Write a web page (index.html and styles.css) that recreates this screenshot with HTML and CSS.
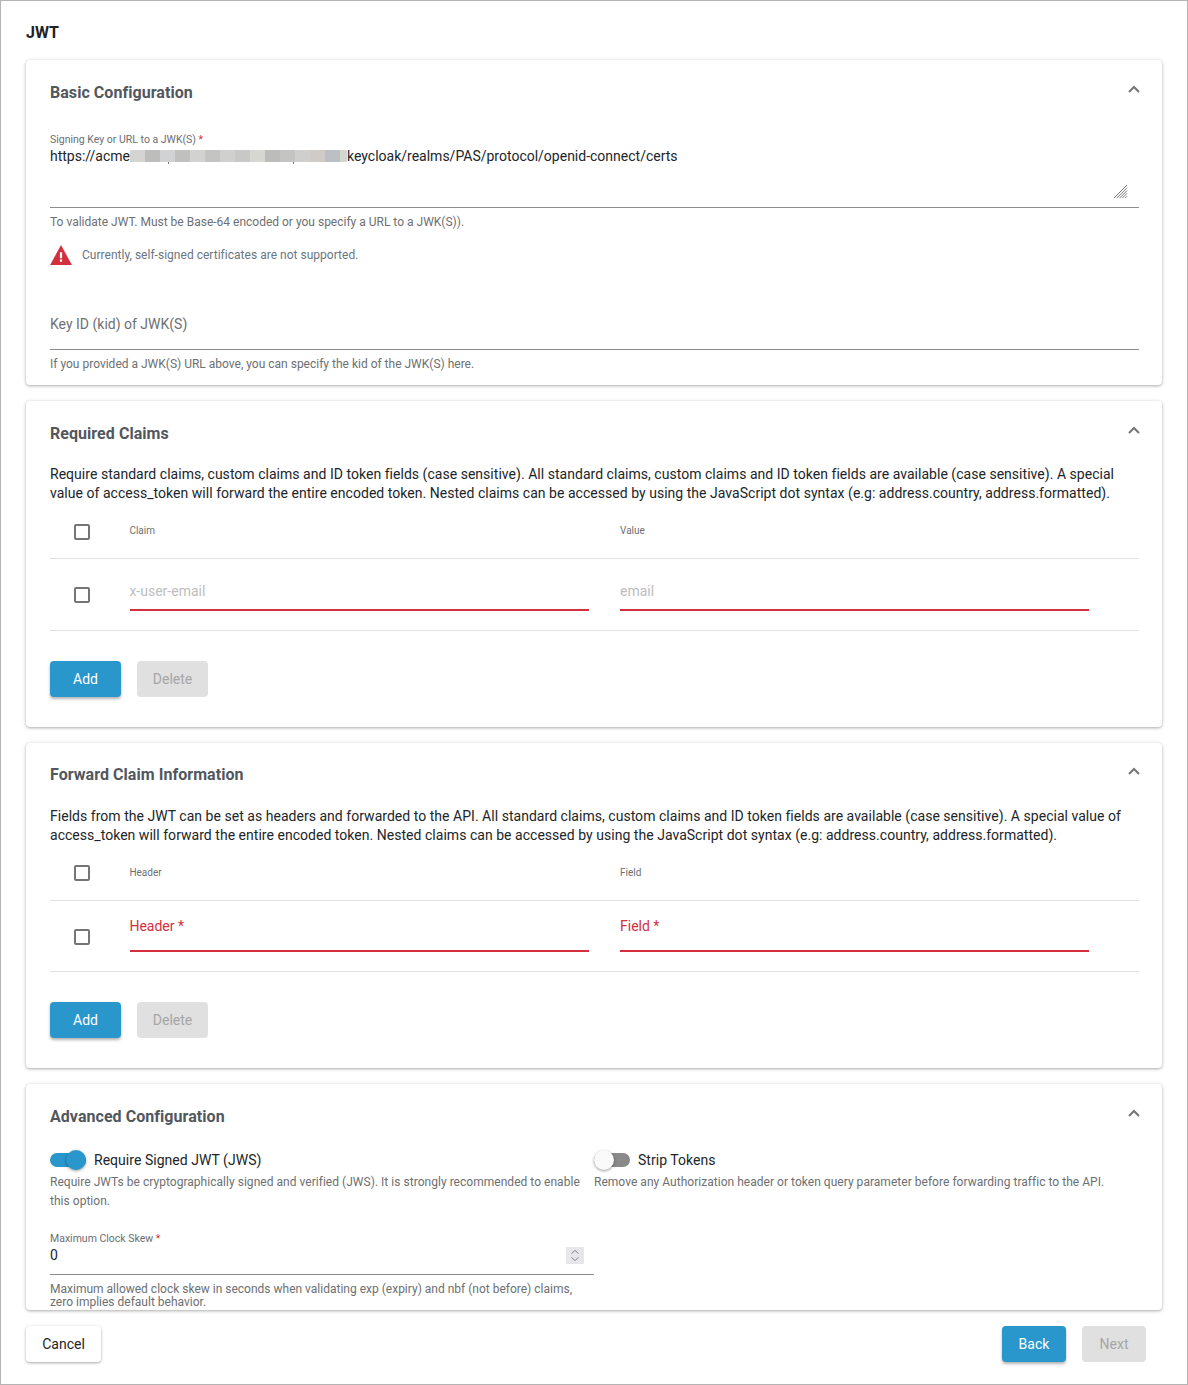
FILE: index.html
```html
<!DOCTYPE html>
<html lang="en">
<head>
  <meta charset="UTF-8">
  <meta name="viewport" content="width=device-width, initial-scale=1.0">
  <title>JWT</title>
  <link rel="stylesheet" href="styles.css">
</head>
<body>
  <div class="page">
    <div class="page-title">JWT</div>

    <!-- Basic Configuration -->
    <section class="card card-basic">
      <div class="card-header">
        <h2 class="card-title">Basic Configuration</h2>
        <svg class="chevron" viewBox="0 0 12 8"><path d="M1 7l5-5 5 5" /></svg>
      </div>

      <div class="field-label">Signing Key or URL to a JWK(S) <span class="req">*</span></div>
      <div class="textarea">
        <div class="url">https://acme<span class="redacted"></span>keycloak/realms/PAS/protocol/openid-connect/certs</div>
        <svg class="grip" viewBox="0 0 16 16"><path d="M15 1L1 15M15 4L4 15M15 7L7 15M15 10L10 15M15 13L13 15" /></svg>
      </div>
      <div class="help help-first">To validate JWT. Must be Base-64 encoded or you specify a URL to a JWK(S)).</div>

      <div class="warning">
        <svg class="warning-icon" viewBox="0 0 24 22"><path class="warning-tri" d="M12 0L24 22H0z" /><path class="warning-mark" d="M10.8 8h2.4v6.5h-2.4zM10.8 16h2.4v2.4h-2.4z" /></svg>
        <span>Currently, self-signed certificates are not supported.</span>
      </div>

      <div class="input-line key-id">Key ID (kid) of JWK(S)</div>
      <div class="help help-first">If you provided a JWK(S) URL above, you can specify the kid of the JWK(S) here.</div>
    </section>

    <!-- Required Claims -->
    <section class="card card-table">
      <div class="card-header">
        <h2 class="card-title">Required Claims</h2>
        <svg class="chevron" viewBox="0 0 12 8"><path d="M1 7l5-5 5 5" /></svg>
      </div>
      <p class="intro">Require standard claims, custom claims and ID token fields (case sensitive). All standard claims, custom claims and ID token fields are available (case sensitive). A special value of access_token will forward the entire encoded token. Nested claims can be accessed by using the JavaScript dot syntax (e.g: address.country, address.formatted).</p>

      <div class="table-head">
        <div class="col-check"><span class="checkbox"></span></div>
        <div class="col-a"><span class="col-text">Claim</span></div>
        <div class="col-b">Value</div>
      </div>
      <div class="table-row">
        <div class="col-check"><span class="checkbox"></span></div>
        <div class="col-a red-field"><span class="placeholder col-text">x-user-email</span></div>
        <div class="col-b red-field"><span class="placeholder">email</span></div>
      </div>

      <div class="actions">
        <button class="btn btn-primary">Add</button>
        <button class="btn btn-disabled">Delete</button>
      </div>
    </section>

    <!-- Forward Claim Information -->
    <section class="card card-table card-forward">
      <div class="card-header">
        <h2 class="card-title">Forward Claim Information</h2>
        <svg class="chevron" viewBox="0 0 12 8"><path d="M1 7l5-5 5 5" /></svg>
      </div>
      <p class="intro">Fields from the JWT can be set as headers and forwarded to the API. All standard claims, custom claims and ID token fields are available (case sensitive). A special value of access_token will forward the entire encoded token. Nested claims can be accessed by using the JavaScript dot syntax (e.g: address.country, address.formatted).</p>

      <div class="table-head">
        <div class="col-check"><span class="checkbox"></span></div>
        <div class="col-a"><span class="col-text">Header</span></div>
        <div class="col-b">Field</div>
      </div>
      <div class="table-row">
        <div class="col-check"><span class="checkbox"></span></div>
        <div class="col-a red-field"><span class="error-label col-text">Header *</span></div>
        <div class="col-b red-field"><span class="error-label">Field *</span></div>
      </div>

      <div class="actions">
        <button class="btn btn-primary">Add</button>
        <button class="btn btn-disabled">Delete</button>
      </div>
    </section>

    <!-- Advanced Configuration -->
    <section class="card card-advanced">
      <div class="card-header">
        <h2 class="card-title">Advanced Configuration</h2>
        <svg class="chevron" viewBox="0 0 12 8"><path d="M1 7l5-5 5 5" /></svg>
      </div>

      <div class="switch-columns">
        <div class="switch-col">
          <div class="switch-line">
            <span class="switch switch-on"><span class="thumb"></span></span>
            <span class="switch-text">Require Signed JWT (JWS)</span>
          </div>
          <div class="switch-help">Require JWTs be cryptographically signed and verified (JWS). It is strongly recommended to enable this option.</div>
        </div>
        <div class="switch-col">
          <div class="switch-line">
            <span class="switch"><span class="thumb"></span></span>
            <span class="switch-text">Strip Tokens</span>
          </div>
          <div class="switch-help">Remove any Authorization header or token query parameter before forwarding traffic to the API.</div>
        </div>
      </div>

      <div class="skew">
        <div class="field-label">Maximum Clock Skew <span class="req">*</span></div>
        <div class="number-input">
          <span>0</span>
          <span class="spinner">
            <svg viewBox="0 0 18 18"><path d="M5.5 7L9 3.5 12.500 7M5.500 11L9 14.500 12.500 11" /></svg>
          </span>
        </div>
        <div class="help skew-help">Maximum allowed clock skew in seconds when validating exp (expiry) and nbf (not before) claims, zero implies default behavior.</div>
      </div>
    </section>

    <div class="footer">
      <button class="btn btn-white">Cancel</button>
      <div class="footer-right">
        <button class="btn btn-primary btn-nav">Back</button>
        <button class="btn btn-disabled btn-nav">Next</button>
      </div>
    </div>
  </div>
</body>
</html>
```

FILE: styles.css
```css
/* Basic Reset */
* {
  margin: 0;
  padding: 0;
  box-sizing: border-box;
}

html, body {
  height: 100%;
}

body {
  font-family: Roboto, "Liberation Sans", Arial, sans-serif;
  background-color: #fff;
  color: #212529;
  overflow: hidden;
}

.page {
  height: 1385px;
  border: 1px solid #b4b4b4;
  padding: 0 25px;
  overflow: hidden;
}

.page-title {
  font-size: 16px;
  font-weight: 700;
  line-height: 20px;
  color: #1f2226;
  padding-top: 1px;
  margin-top: 21px;
  margin-bottom: 17px;
}

/* Cards */
.card {
  width: 1136px;
  background-color: #fff;
  border-radius: 4px;
  padding: 0 24px;
  margin-bottom: 16px;
  overflow: hidden;
  box-shadow: 0 1px 3px rgba(0, 0, 0, 0.3), 0 0 6px rgba(0, 0, 0, 0.06);
}

.card-basic { height: 325px; }
.card-table { height: 326px; }
.card-forward { height: 325px; }
.card-advanced { height: 226px; }

.card-header {
  display: flex;
  justify-content: space-between;
  height: 66px;
  padding-top: 23px;
}

.card-forward .card-header {
  padding-top: 22px;
}

.card-title {
  font-size: 16px;
  font-weight: 700;
  line-height: 20px;
  letter-spacing: 0.05px;
  color: #52575d;
}

.chevron {
  width: 12px;
  height: 8px;
  margin-top: 2px;
  margin-right: -2px;
  fill: none;
  stroke: #757575;
  stroke-width: 2;
}

/* Inputs */
.field-label {
  font-size: 10.5px;
  line-height: 13px;
  color: #6b6e72;
  margin-top: 7px;
}

.req {
  color: #d32f3c;
}

.textarea {
  position: relative;
  width: 1089px;
  height: 62px;
  border-bottom: 1px solid #8c8c8c;
}

.url {
  display: flex;
  align-items: center;
  font-size: 14px;
  line-height: 20px;
  color: #212529;
}

.redacted {
  position: relative;
  display: block;
  width: 217px;
  height: 12px;
  background: linear-gradient(to right,
    #d4d4d2 0 15px, #bdbdbb 15px 30px, #d0d2d4 30px 45px, #c0c0be 45px 60px,
    #d2d2d0 60px 75px, #c4c4c2 75px 90px, #d0d0ce 90px 105px, #c8c8c6 105px 120px,
    #d6d6d2 120px 135px, #bcbcba 135px 150px, #c4c4c2 150px 165px, #cfcfcd 165px 180px,
    #cfcbc7 180px 195px, #bcc0c4 195px 210px, #d4d6d0 210px 217px);
}

/* the bits of descender that stick out under the blur */
.redacted::before, .redacted::after {
  content: "";
  position: absolute;
  top: 12px;
  width: 1px;
  height: 2px;
  background-color: #777;
}

.redacted::before { left: 38px; }
.redacted::after { left: 163px; }

.grip {
  position: absolute;
  right: 11px;
  bottom: 8px;
  width: 15px;
  height: 15px;
  fill: none;
  stroke: #6e6e6e;
  stroke-width: 1;
}

.help {
  font-size: 12px;
  line-height: 14px;
  color: #6d7072;
}

.help-first {
  margin-top: 7px;
}

.warning {
  display: flex;
  align-items: center;
  gap: 10px;
  height: 20px;
  margin-top: 16px;
  font-size: 12px;
  letter-spacing: 0.02px;
  color: #6b7680;
}

.warning-icon {
  width: 22px;
  height: 20px;
}

.warning-tri {
  fill: #d32f3c;
}

.warning-mark {
  fill: #fff;
}

.input-line {
  width: 1089px;
  border-bottom: 1px solid #8c8c8c;
  font-size: 14px;
  color: #6d7072;
}

.key-id {
  height: 41px;
  margin-top: 44px;
  padding-top: 5px;
  line-height: 20px;
}

/* Claim tables */
.intro {
  font-size: 14px;
  line-height: 19px;
  letter-spacing: 0.03px;
  color: #212529;
  margin-top: -2px;
}

.table-head, .table-row {
  display: flex;
  width: 1089px;
  border-bottom: 1px solid #e0e0e0;
}

.table-head {
  height: 56px;
  font-size: 10px;
  color: #6d7072;
  padding-top: 21px;
  line-height: 14px;
}

.table-row {
  height: 72px;
}

.card-forward .table-row {
  height: 71px;
}

.col-check {
  width: 80px;
  padding-left: 24px;
  flex-shrink: 0;
}

.col-a {
  width: 459px;
  margin-right: 31px;
}

.col-b {
  width: 469px;
}

.col-text {
  display: block;
  margin-left: -0.6px;
}

.checkbox {
  display: block;
  width: 16px;
  height: 16px;
  border: 2px solid #757575;
  border-radius: 2px;
}

.card-forward .table-head .checkbox {
  margin-top: -1px;
}

.table-row .checkbox {
  margin-top: 28px;
}

.red-field {
  height: 52px;
  border-bottom: 2px solid #d32f3c;
  font-size: 14px;
  line-height: 20px;
}

.card-forward .red-field {
  height: 51px;
}

.placeholder {
  display: block;
  padding-top: 22px;
  color: #bdbdbd;
}

.error-label {
  display: block;
  padding-top: 15px;
  color: #d32f3c;
}

.actions {
  display: flex;
  gap: 16px;
  margin-top: 30px;
}

/* Buttons */
.btn {
  height: 36px;
  width: 71px;
  border: none;
  border-radius: 4px;
  font-family: inherit;
  font-size: 14px;
  font-weight: 400;
}

.btn-primary {
  background-color: #2996cc;
  color: #fff;
  box-shadow: 0 2px 3px rgba(0, 0, 0, 0.3);
}

.btn-disabled {
  background-color: #e0e0e0;
  color: #a6a6a6;
}

.btn-white {
  width: 75px;
  background-color: #fff;
  color: #212529;
  box-shadow: 0 1px 3px rgba(0, 0, 0, 0.35);
}

.btn-nav {
  width: 64px;
}

/* Advanced section */
.switch-columns {
  display: flex;
}

.switch-col {
  width: 544px;
}

.switch-line {
  display: flex;
  align-items: center;
  height: 20px;
}

.switch-text {
  font-size: 14px;
  letter-spacing: 0.03px;
  color: #212529;
  margin-left: 8px;
}

.switch {
  position: relative;
  display: block;
  width: 36px;
  height: 14px;
  border-radius: 7px;
  background-color: #8a8a8a;
}

.switch-on {
  background-color: #2996cc;
}

.thumb {
  position: absolute;
  top: -3px;
  left: 0;
  width: 20px;
  height: 20px;
  border-radius: 50%;
  background-color: #fafafa;
  box-shadow: 0 1px 3px rgba(0, 0, 0, 0.4);
}

.switch-on .thumb {
  left: 16px;
  background-color: #2996cc;
}

.switch-help {
  font-size: 12px;
  line-height: 19px;
  letter-spacing: 0.03px;
  color: #6d7072;
  margin-top: 3px;
}

.skew {
  width: 544px;
  margin-top: 21px;
}

.skew .field-label {
  margin-top: 0;
}

.number-input {
  display: flex;
  justify-content: space-between;
  height: 30px;
  padding-right: 10px;
  border-bottom: 1px solid #8c8c8c;
  font-size: 14px;
  line-height: 20px;
  color: #212529;
}

.spinner {
  display: block;
  width: 18px;
  height: 17px;
  margin-top: 2px;
  background-color: #e6e6eb;
}

.spinner svg {
  display: block;
  width: 18px;
  height: 17px;
  fill: none;
  stroke: #777;
  stroke-width: 1;
}

.skew-help {
  line-height: 13px;
  margin-top: 8px;
}

/* Footer */
.footer {
  display: flex;
  justify-content: space-between;
  width: 1120px;
}

.footer-right {
  display: flex;
  gap: 16px;
}
```
